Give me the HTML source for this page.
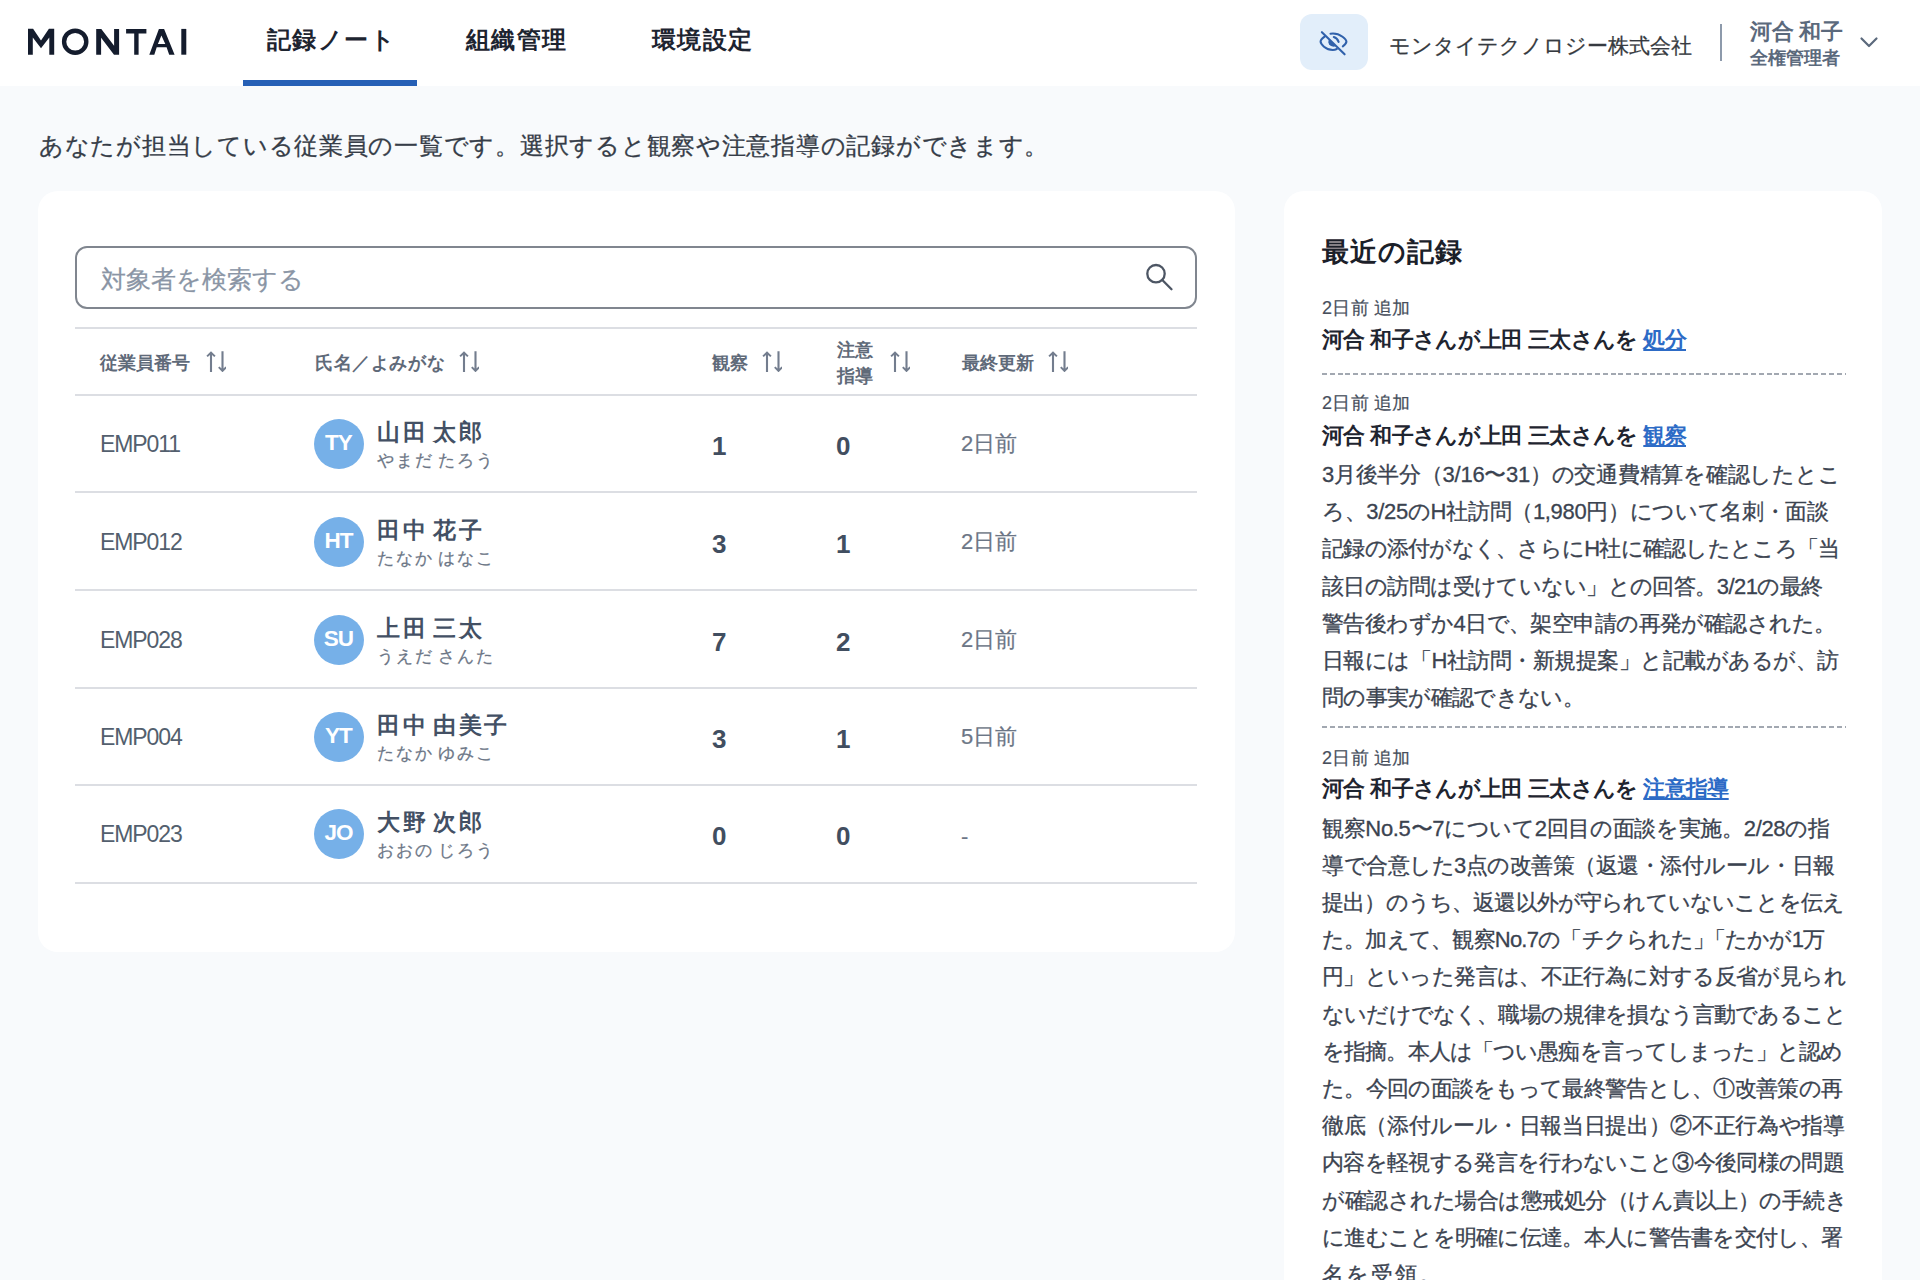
<!DOCTYPE html>
<html lang="ja">
<head>
<meta charset="utf-8">
<style>
*{box-sizing:border-box;margin:0;padding:0}
html,body{width:1920px;height:1280px;overflow:hidden}
body{background:#f8fafc;font-family:"Liberation Sans",sans-serif;color:#333;position:relative}
.a{position:absolute;white-space:nowrap}
#hdr{position:absolute;left:0;top:0;width:1920px;height:86px;background:#fff}
.tab{font-size:24px;line-height:24px;font-weight:bold;color:#1d2430;letter-spacing:1.4px}
#uline{position:absolute;left:243px;top:80px;width:174px;height:6px;background:#2660b6}
#eyebtn{position:absolute;left:1300px;top:14px;width:68px;height:56px;border-radius:12px;background:#e2eefa}
#company{font-size:20.6px;line-height:22px;color:#363a40;-webkit-text-stroke:0.25px #363a40}
#vdiv{position:absolute;left:1720px;top:24px;width:2px;height:37px;background:#8d9aab}
#uname{font-size:21.5px;line-height:22px;font-weight:bold;color:#5b697c;word-spacing:-1px}
#urole{font-size:18.2px;line-height:19px;font-weight:bold;color:#5b697c}
#intro{font-size:24px;line-height:24px;color:#363d48;letter-spacing:0.73px;-webkit-text-stroke:0.3px #363d48}
.card{position:absolute;background:#fff;border-radius:20px}
#search{position:absolute;left:75px;top:246px;width:1122px;height:63px;border:2px solid #80868f;border-radius:12px;background:#fff}
#ph{font-size:25px;line-height:25px;color:#8a95a5;-webkit-text-stroke:0.25px #8a95a5}
.hl{position:absolute;left:75px;width:1122px;height:2px;background:#dcdee3}
.th{font-size:18.4px;line-height:19px;font-weight:bold;color:#5f6a79}
.emp{font-size:23px;line-height:23px;color:#535f6e;letter-spacing:-1.1px}
.av{position:absolute;left:314px;width:50px;height:50px;border-radius:25px;background:#76b0e8;color:#fff;font-weight:bold;font-size:22.5px;line-height:48.5px;text-align:center;letter-spacing:-1px;text-indent:-1px}
.nm{font-size:23px;line-height:23px;font-weight:bold;color:#435064;letter-spacing:2.7px;word-spacing:-4.5px}
.kn{font-size:17px;line-height:17px;color:#6c7686;letter-spacing:2px;word-spacing:-2.5px;-webkit-text-stroke:0.25px #6c7686}
.cnt{font-size:26px;line-height:26px;font-weight:bold;color:#414e60}
.upd{font-size:22px;line-height:22px;color:#6c7686;-webkit-text-stroke:0.2px #6c7686}
#rhead{font-size:27px;line-height:27px;font-weight:bold;color:#1b2029;letter-spacing:1px}
.meta{font-size:18px;line-height:18px;color:#474f5c;letter-spacing:0.4px;word-spacing:-1px;-webkit-text-stroke:0.2px #474f5c}
.ttl{font-size:22px;line-height:22px;font-weight:bold;color:#1f2530;letter-spacing:-0.65px}
.ttl a{color:#2d6bc6;text-decoration:underline;text-underline-offset:1.5px;text-decoration-thickness:1.6px}
.dash{position:absolute;left:1322px;width:524px;height:2px;background:repeating-linear-gradient(to right,#a2a8b1 0 5px,transparent 5px 7.8px)}
.body{font-size:22px;line-height:37.2px;color:#3b4350;letter-spacing:-0.4px;-webkit-text-stroke:0.3px #3b4350}
.sq{letter-spacing:-11px!important}
</style>
</head>
<body>
<div id="hdr"></div>
<!-- logo -->
<svg class="a" style="left:0;top:0" width="220" height="86" viewBox="0 0 220 86">
 <g fill="#141c2d" fill-rule="evenodd">
  <path d="M28 54.7V28.8H33.1L41 40.4 48.9 28.8H54.2V54.7H49.3V37.6L41 48.3 32.8 37.6V54.7Z"/>
  <path d="M75.2 28.5A13.3 13.2 0 1 1 75.2 54.9A13.3 13.2 0 1 1 75.2 28.5ZM75.2 32.9A8.9 8.8 0 1 0 75.2 50.5A8.9 8.8 0 1 0 75.2 32.9Z"/>
  <path d="M96.2 54.7V28.9H101.3L114.1 45.8V28.9H119.1V54.7H114L101.1 37.8V54.7Z"/>
  <path d="M126.1 28.9H146.4V33.6H138.6V54.7H134.2V33.6H126.1Z"/>
  <path d="M149.3 54.7L158.9 28.9H164.1L174.6 54.7H169.2L166.6 47.3H156.7L154.3 54.7ZM161.4 35.5L165.3 44H157.9Z"/>
  <path d="M181.3 28.9H186.3V54.7H181.3Z"/>
 </g>
</svg>
<div class="a tab" style="left:267px;top:28px">記録ノート</div>
<div class="a tab" style="left:466px;top:28px">組織管理</div>
<div class="a tab" style="left:652px;top:28px">環境設定</div>
<div id="uline"></div>

<div id="eyebtn"></div>
<svg class="a" style="left:1300px;top:14px" width="68" height="56" viewBox="0 0 68 56">
 <g fill="none" stroke="#3061ab" stroke-width="2.1" stroke-linecap="round">
  <path d="M21.9 18.2L44.6 40.3"/>
  <path d="M24.6 22.6C21.8 24.6 20.6 26.6 20.6 27.6 20.6 30 25.6 36 32.8 36 34.2 36 35.6 35.6 36.8 35"/>
  <path d="M30.5 19.8C31.3 19.6 32.1 19.5 33 19.5 40.5 19.5 46.4 25.5 46.4 27.6 46.4 28.9 45.1 30.8 42.8 32.3"/>
  <path d="M33.8 23.1C35.7 23.7 37.8 25.6 38.6 27.9"/>
 </g>
 <path d="M29.1 25.2C28.4 26.3 28.2 27.4 28.4 28.6 28.9 31 31 32.7 33.6 32.7 34.3 32.7 35 32.5 35.8 32.1Z" fill="#3061ab"/>
</svg>
<div class="a" id="company" style="left:1389px;top:35px">モンタイテクノロジー株式会社</div>
<div id="vdiv"></div>
<div class="a" id="uname" style="left:1750px;top:21px">河合 和子</div>
<div class="a" id="urole" style="left:1750px;top:49px">全権管理者</div>
<svg class="a" style="left:1858px;top:34px" width="22" height="16" viewBox="0 0 22 16">
 <path d="M3.5 4.5L11 12 18.5 4.5" fill="none" stroke="#5b697c" stroke-width="2.2" stroke-linecap="round" stroke-linejoin="round"/>
</svg>

<div class="a" id="intro" style="left:39px;top:134px">あなたが担当している従業員の一覧です。選択すると観察や注意指導の記録ができます。</div>

<!-- left card -->
<div class="card" style="left:38px;top:191px;width:1197px;height:761px"></div>
<div id="search"></div>
<div class="a" id="ph" style="left:101px;top:267px">対象者を検索する</div>
<svg class="a" style="left:1140px;top:258px" width="40" height="40" viewBox="0 0 40 40">
 <circle cx="16" cy="15.7" r="8.7" fill="none" stroke="#4d5664" stroke-width="2.3"/>
 <path d="M22.3 22L31.5 31.3" stroke="#4d5664" stroke-width="2.3" stroke-linecap="round"/>
</svg>

<div class="hl" style="top:327px"></div>
<div class="hl" style="top:394px"></div>
<div class="hl" style="top:491px"></div>
<div class="hl" style="top:589px"></div>
<div class="hl" style="top:687px"></div>
<div class="hl" style="top:784px"></div>
<div class="hl" style="top:882px"></div>

<!-- table header -->
<div class="a th" style="left:100px;top:353px">従業員番号</div>
<div class="a th" style="left:315px;top:353px;letter-spacing:0.6px">氏名／よみがな</div>
<div class="a th" style="left:712px;top:353px">観察</div>
<div class="a th" style="left:837px;top:336.5px;line-height:26px;white-space:normal">注意<br>指導</div>
<div class="a th" style="left:962px;top:353px">最終更新</div>
<svg class="a" style="left:205.6px;top:349px" width="20" height="23"><g fill="#737d8e"><path d="M5 2.2L9.6 6.7 8.2 8.1 6.05 6V23.3H3.95V6L1.8 8.1 0.4 6.7Z"/><path d="M16.5 23.3L20.9 18.8 19.5 17.4 17.55 19.5V2.25H15.45V19.5L13.5 17.4 12.1 18.8Z"/></g></svg>
<svg class="a" style="left:458.6px;top:349px" width="20" height="23"><g fill="#737d8e"><path d="M5 2.2L9.6 6.7 8.2 8.1 6.05 6V23.3H3.95V6L1.8 8.1 0.4 6.7Z"/><path d="M16.5 23.3L20.9 18.8 19.5 17.4 17.55 19.5V2.25H15.45V19.5L13.5 17.4 12.1 18.8Z"/></g></svg>
<svg class="a" style="left:761.5px;top:349px" width="20" height="23"><g fill="#737d8e"><path d="M5 2.2L9.6 6.7 8.2 8.1 6.05 6V23.3H3.95V6L1.8 8.1 0.4 6.7Z"/><path d="M16.5 23.3L20.9 18.8 19.5 17.4 17.55 19.5V2.25H15.45V19.5L13.5 17.4 12.1 18.8Z"/></g></svg>
<svg class="a" style="left:889.6px;top:349px" width="20" height="23"><g fill="#737d8e"><path d="M5 2.2L9.6 6.7 8.2 8.1 6.05 6V23.3H3.95V6L1.8 8.1 0.4 6.7Z"/><path d="M16.5 23.3L20.9 18.8 19.5 17.4 17.55 19.5V2.25H15.45V19.5L13.5 17.4 12.1 18.8Z"/></g></svg>
<svg class="a" style="left:1048px;top:349px" width="20" height="23"><g fill="#737d8e"><path d="M5 2.2L9.6 6.7 8.2 8.1 6.05 6V23.3H3.95V6L1.8 8.1 0.4 6.7Z"/><path d="M16.5 23.3L20.9 18.8 19.5 17.4 17.55 19.5V2.25H15.45V19.5L13.5 17.4 12.1 18.8Z"/></g></svg>

<!-- rows -->
<div class="a emp" style="left:100px;top:433px">EMP011</div>
<div class="av" style="top:419px">TY</div>
<div class="a nm" style="left:377px;top:421px">山田 太郎</div>
<div class="a kn" style="left:377px;top:452px">やまだ たろう</div>
<div class="a cnt" style="left:712px;top:433px">1</div>
<div class="a cnt" style="left:836px;top:433px">0</div>
<div class="a upd" style="left:961px;top:433px">2日前</div>

<div class="a emp" style="left:100px;top:530.5px">EMP012</div>
<div class="av" style="top:516.5px">HT</div>
<div class="a nm" style="left:377px;top:518.5px">田中 花子</div>
<div class="a kn" style="left:377px;top:549.5px">たなか はなこ</div>
<div class="a cnt" style="left:712px;top:530.5px">3</div>
<div class="a cnt" style="left:836px;top:530.5px">1</div>
<div class="a upd" style="left:961px;top:530.5px">2日前</div>

<div class="a emp" style="left:100px;top:628.5px">EMP028</div>
<div class="av" style="top:614.5px">SU</div>
<div class="a nm" style="left:377px;top:616.5px">上田 三太</div>
<div class="a kn" style="left:377px;top:647.5px">うえだ さんた</div>
<div class="a cnt" style="left:712px;top:628.5px">7</div>
<div class="a cnt" style="left:836px;top:628.5px">2</div>
<div class="a upd" style="left:961px;top:628.5px">2日前</div>

<div class="a emp" style="left:100px;top:726px">EMP004</div>
<div class="av" style="top:712px">YT</div>
<div class="a nm" style="left:377px;top:714px">田中 由美子</div>
<div class="a kn" style="left:377px;top:745px">たなか ゆみこ</div>
<div class="a cnt" style="left:712px;top:726px">3</div>
<div class="a cnt" style="left:836px;top:726px">1</div>
<div class="a upd" style="left:961px;top:726px">5日前</div>

<div class="a emp" style="left:100px;top:823px">EMP023</div>
<div class="av" style="top:809px">JO</div>
<div class="a nm" style="left:377px;top:811px">大野 次郎</div>
<div class="a kn" style="left:377px;top:842px">おおの じろう</div>
<div class="a cnt" style="left:712px;top:823px">0</div>
<div class="a cnt" style="left:836px;top:823px">0</div>
<div class="a upd" style="left:961px;top:826px">-</div>

<!-- right card -->
<div class="card" style="left:1284px;top:191px;width:598px;height:1200px"></div>
<div class="a" id="rhead" style="left:1322px;top:239px">最近の記録</div>

<div class="a meta" style="left:1322px;top:299px">2日前 追加</div>
<div class="a ttl" style="left:1322px;top:329px">河合 和子さんが上田 三太さんを <a>処分</a></div>
<div class="dash" style="top:372.5px"></div>

<div class="a meta" style="left:1322px;top:394px">2日前 追加</div>
<div class="a ttl" style="left:1322px;top:425px">河合 和子さんが上田 三太さんを <a>観察</a></div>
<div class="a body" style="left:1322px;top:456px"><div style="letter-spacing:-0.269px">3月後半分（3/16〜31）の交通費精算を確認したとこ</div><div style="letter-spacing:-0.319px">ろ、3/25のH社訪問（1,980円）について名刺・面談</div><div style="letter-spacing:-0.730px">記録の添付がなく、さらにH社に確認したところ「当</div><div style="letter-spacing:-0.567px">該日の訪問は受けていない」との回答。3/21の最終</div><div style="letter-spacing:-0.574px">警告後わずか4日で、架空申請の再発が確認された。</div><div style="letter-spacing:-0.504px">日報には「H社訪問・新規提案」と記載があるが、訪</div><div style="letter-spacing:-0.673px">問の事実が確認できない。</div></div>
<div class="dash" style="top:726.3px"></div>

<div class="a meta" style="left:1322px;top:749px">2日前 追加</div>
<div class="a ttl" style="left:1322px;top:777.5px">河合 和子さんが上田 三太さんを <a>注意指導</a></div>
<div class="a body" style="left:1322px;top:809.5px"><div style="letter-spacing:-0.326px">観察No.5〜7について2回目の面談を実施。2/28の指</div><div style="letter-spacing:-0.487px">導で合意した3点の改善策（返還・添付ルール・日報</div><div style="letter-spacing:-0.826px">提出）のうち、返還以外が守られていないことを伝え</div><div style="letter-spacing:-0.776px">た。加えて、観察No.7の「チクられた<span class="sq">」</span>「たかが1万</div><div style="letter-spacing:-0.626px">円」といった発言は、不正行為に対する反省が見られ</div><div style="letter-spacing:-0.826px">ないだけでなく、職場の規律を損なう言動であること</div><div style="letter-spacing:-0.870px">を指摘。本人は「つい愚痴を言ってしまった」と認め</div><div style="letter-spacing:-0.696px">た。今回の面談をもって最終警告とし、①改善策の再</div><div style="letter-spacing:-0.357px">徹底（添付ルール・日報当日提出）②不正行為や指導</div><div style="letter-spacing:-0.661px">内容を軽視する発言を行わないこと③今後同様の問題</div><div style="letter-spacing:-0.478px">が確認された場合は懲戒処分（けん責以上）の手続き</div><div style="letter-spacing:-0.696px">に進むことを明確に伝達。本人に警告書を交付し、署</div><div style="letter-spacing:1.900px">名を受領。</div></div>
</body>
</html>
